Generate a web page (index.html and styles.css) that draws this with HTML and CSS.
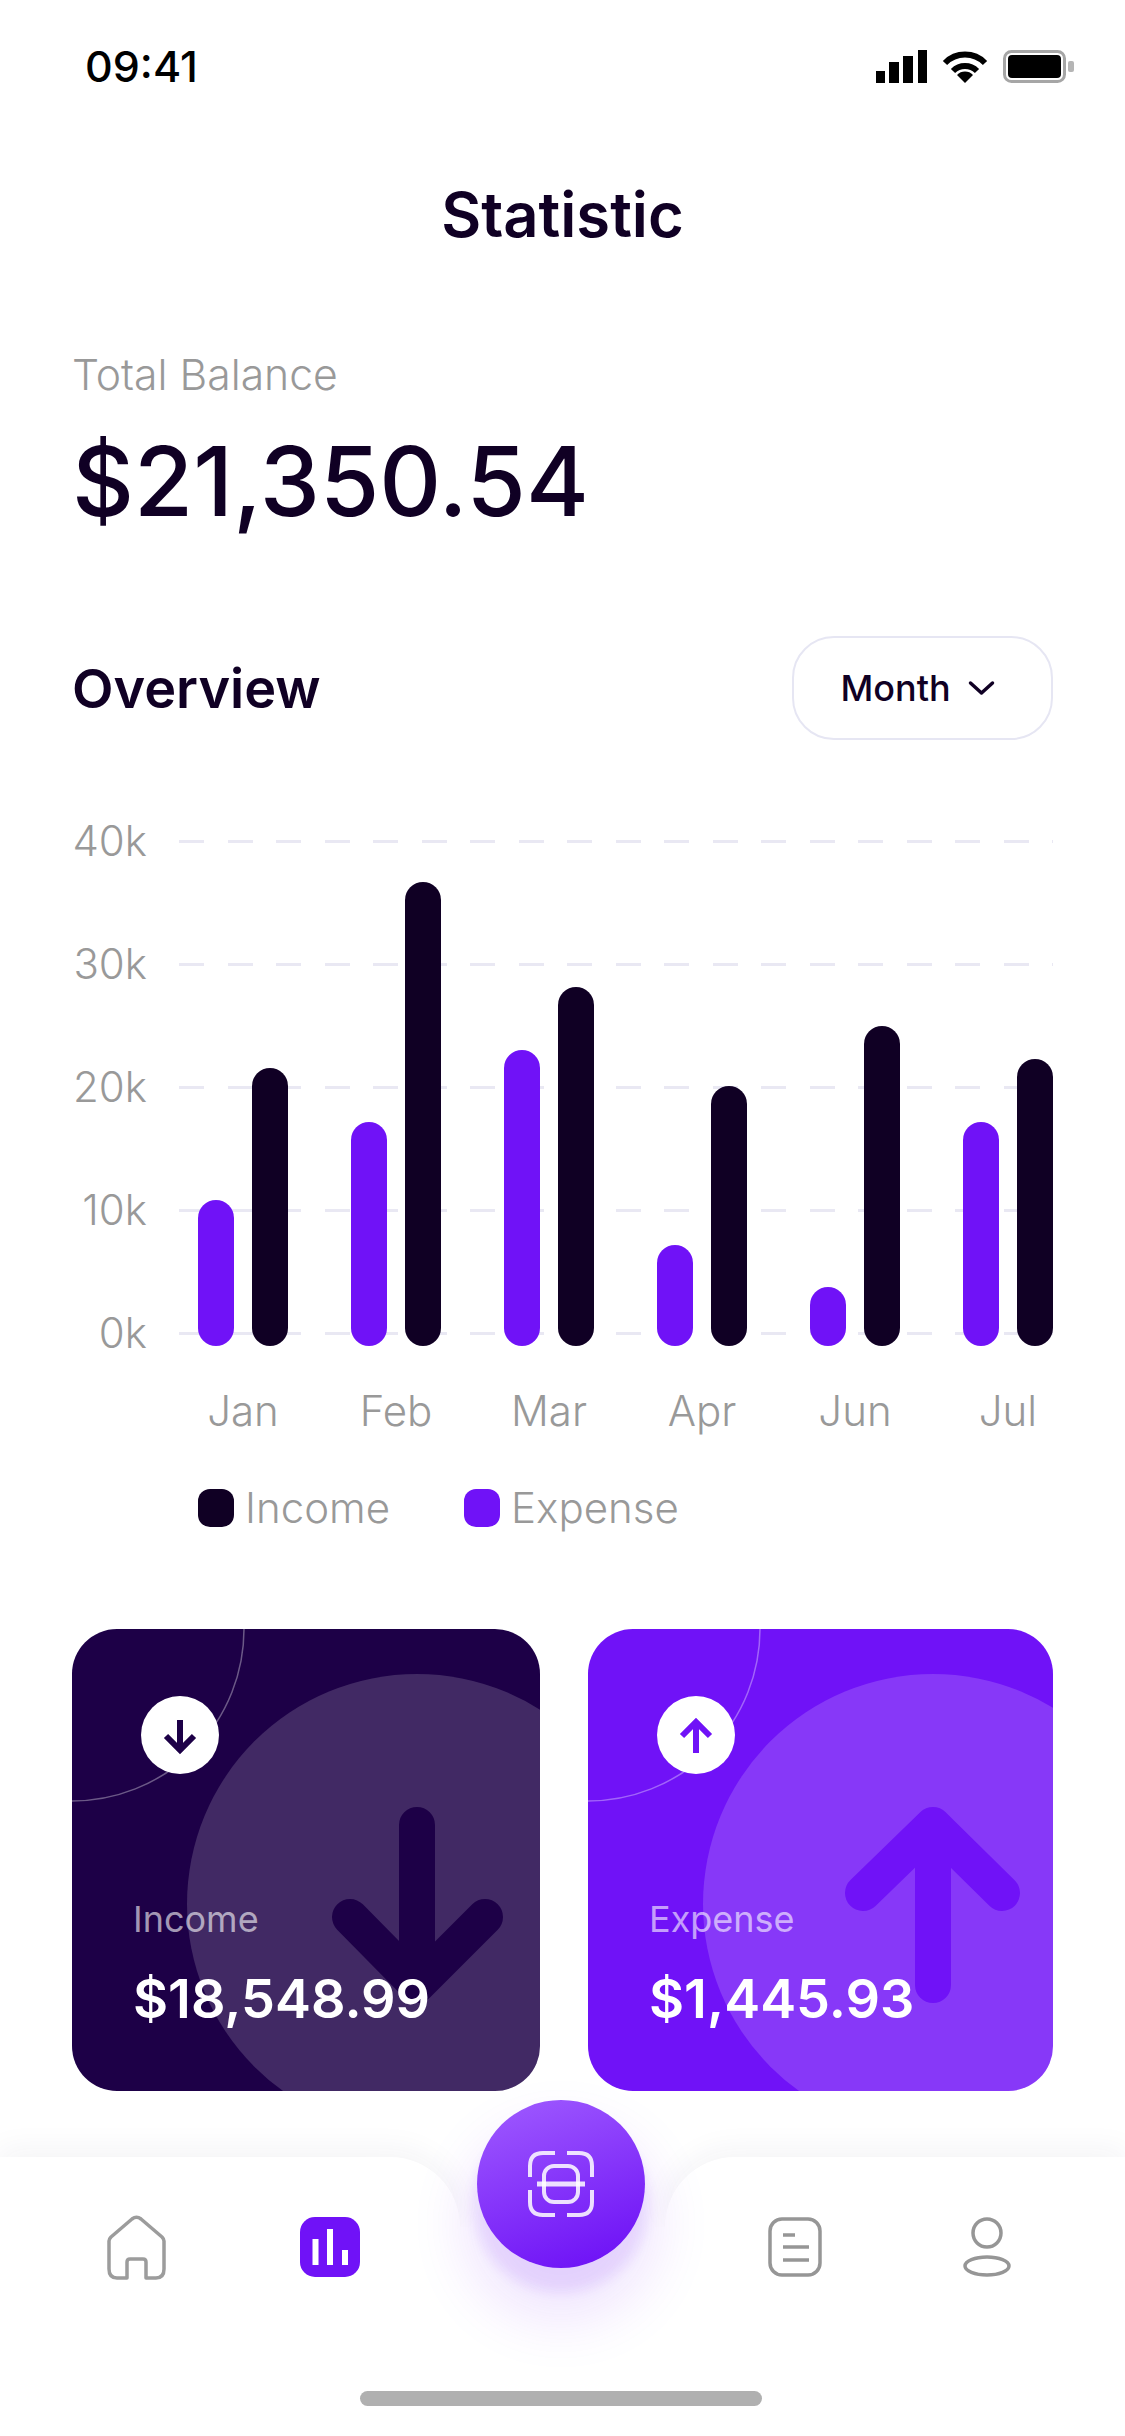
FILE: index.html
```html
<!DOCTYPE html>
<html lang="en">
<head>
    <meta charset="UTF-8">
    <meta name="viewport" content="width=device-width, initial-scale=1.0">
    <title>Statistic</title>
    <link rel="stylesheet" href="styles.css">
</head>
<body>
    <div id="screen">
        <div class="status-bar">
            <span class="time">09:41</span>
            <div class="status-icons">
                <svg width="51" height="33" viewBox="0 0 51 33" fill="#000">
                    <rect x="0" y="21" width="9" height="12"/>
                    <rect x="13" y="12" width="10" height="21"/>
                    <rect x="27" y="6" width="10" height="27"/>
                    <rect x="42" y="0" width="9" height="33"/>
                </svg>
                <svg width="46" height="33" viewBox="0 0 46 33" fill="none" stroke="#000" stroke-width="6">
                    <path d="M3 13 A28 28 0 0 1 43 13"/>
                    <path d="M11 21 A17 17 0 0 1 35 21"/>
                    <path d="M23 33 L15 25 A11 11 0 0 1 31 25 Z" fill="#000" stroke="none"/>
                </svg>
                <svg width="71" height="33" viewBox="0 0 71 33">
                    <rect x="1.5" y="1.5" width="60" height="30" rx="7" fill="none" stroke="#a6a6a6" stroke-width="3"/>
                    <rect x="5" y="5" width="53" height="23" rx="4" fill="#000"/>
                    <rect x="65" y="11" width="6" height="11" rx="2" fill="#b5b5b5"/>
                </svg>
            </div>
        </div>

        <h1 class="title">Statistic</h1>

        <div class="balance">
            <p class="balance-label">Total Balance</p>
            <p class="balance-value">$21,350.54</p>
        </div>

        <div class="overview-head">
            <h2>Overview</h2>
            <div class="month-select">
                <span>Month</span>
                <svg width="27" height="16" viewBox="0 0 27 16" fill="none" stroke="#100024" stroke-width="3.5" stroke-linecap="round" stroke-linejoin="round">
                    <path d="M2.5 3 L13.5 13 L24.5 3"/>
                </svg>
            </div>
        </div>

        <div class="chart">
            <div class="y-axis">
                <span>40k</span>
                <span>30k</span>
                <span>20k</span>
                <span>10k</span>
                <span>0k</span>
            </div>
            <div class="plot">
                <div class="grid-lines">
                    <i></i><i></i><i></i><i></i><i></i>
                </div>
                <div class="bars">
                    <div class="bar-group">
                        <div class="bar expense" style="height: 146px"></div>
                        <div class="bar income" style="height: 278px"></div>
                    </div>
                    <div class="bar-group">
                        <div class="bar expense" style="height: 224px"></div>
                        <div class="bar income" style="height: 464px"></div>
                    </div>
                    <div class="bar-group">
                        <div class="bar expense" style="height: 296px"></div>
                        <div class="bar income" style="height: 359px"></div>
                    </div>
                    <div class="bar-group">
                        <div class="bar expense" style="height: 101px"></div>
                        <div class="bar income" style="height: 260px"></div>
                    </div>
                    <div class="bar-group">
                        <div class="bar expense" style="height: 59px"></div>
                        <div class="bar income" style="height: 320px"></div>
                    </div>
                    <div class="bar-group">
                        <div class="bar expense" style="height: 224px"></div>
                        <div class="bar income" style="height: 287px"></div>
                    </div>
                </div>
            </div>
        </div>

        <div class="months">
            <span>Jan</span>
            <span>Feb</span>
            <span>Mar</span>
            <span>Apr</span>
            <span>Jun</span>
            <span>Jul</span>
        </div>

        <div class="legend">
            <div class="legend-item"><i class="swatch income"></i>Income</div>
            <div class="legend-item"><i class="swatch expense"></i>Expense</div>
        </div>

        <div class="cards">
            <div class="card card-income">
                <svg class="card-deco" viewBox="0 0 468 462" fill="none">
                    <circle cx="0" cy="0" r="172" stroke="#fff" stroke-opacity="0.35" stroke-width="1.5"/>
                    <circle cx="345" cy="275" r="230" fill="#fff" fill-opacity="0.16"/>
                    <path d="M345 196 V356 M278 288 L345 356 L413 288" stroke="#1d0047" stroke-width="36" stroke-linecap="round" stroke-linejoin="round"/>
                </svg>
                <div class="card-icon">
                    <svg width="78" height="78" viewBox="0 0 78 78" fill="none" stroke="#1d0047" stroke-width="6">
                        <path d="M39 24 V54 M25 40 L39 54 L53 40"/>
                    </svg>
                </div>
                <p class="card-label">Income</p>
                <p class="card-value">$18,548.99</p>
            </div>
            <div class="card card-expense">
                <svg class="card-deco" viewBox="0 0 465 462" fill="none">
                    <circle cx="0" cy="0" r="172" stroke="#fff" stroke-opacity="0.35" stroke-width="1.5"/>
                    <circle cx="345" cy="275" r="230" fill="#fff" fill-opacity="0.16"/>
                    <path d="M345 196 V356 M275 264 L345 196 L414 264" stroke="#7012f7" stroke-width="36" stroke-linecap="round" stroke-linejoin="round"/>
                </svg>
                <div class="card-icon">
                    <svg width="78" height="78" viewBox="0 0 78 78" fill="none" stroke="#7012f7" stroke-width="6">
                        <path d="M39 25 V57 M25 40 L39 26 L53 40"/>
                    </svg>
                </div>
                <p class="card-label">Expense</p>
                <p class="card-value">$1,445.93</p>
            </div>
        </div>

        <div class="nav">
            <div class="nav-panel nav-left">
                <svg width="63" height="66" viewBox="0 0 63 66" fill="none" stroke="#9c9c9c" stroke-width="3.5" stroke-linejoin="round">
                    <path d="M22 64 H12 Q4 64 4 55 V27 Q4 25 6 23 L27 5 Q31.5 1.5 36 5 L57 23 Q59 25 59 27 V55 Q59 64 51 64 H41 V48 Q41 45 38 45 H25 Q22 45 22 48 Z"/>
                </svg>
                <svg width="60" height="60" viewBox="0 0 60 60">
                    <rect width="60" height="60" rx="15" fill="#7012f7"/>
                    <rect x="12.5" y="22" width="6" height="26" fill="#fff"/>
                    <rect x="27" y="12" width="6" height="36" fill="#fff"/>
                    <rect x="42" y="33" width="6" height="15" fill="#fff"/>
                </svg>
            </div>
            <div class="nav-panel nav-right">
                <svg width="54" height="60" viewBox="0 0 54 60" fill="none" stroke="#969696" stroke-width="3.5">
                    <rect x="2" y="2" width="50" height="56" rx="12"/>
                    <path d="M15 18 H27 M15 30 H41 M15 43 H41"/>
                </svg>
                <svg width="48" height="60" viewBox="0 0 48 60" fill="none" stroke="#969696" stroke-width="3.5">
                    <circle cx="24" cy="16" r="14"/>
                    <ellipse cx="24" cy="49" rx="22" ry="9"/>
                </svg>
            </div>
            <div class="scan-btn">
                <svg width="68" height="68" viewBox="0 0 68 68" fill="none" stroke="#fff" stroke-width="4" stroke-opacity="0.85">
                    <path d="M28 3 H16 Q3 3 3 16 V27 M40 3 H52 Q65 3 65 16 V27 M28 65 H16 Q3 65 3 52 V40 M40 65 H52 Q65 65 65 52 V40"/>
                    <rect x="17" y="16" width="34" height="36" rx="10"/>
                    <path d="M10 34 H58" stroke-width="5"/>
                </svg>
            </div>
            <div class="home-indicator"></div>
        </div>
    </div>
</body>
</html>
```

FILE: styles.css
```css
* {
    box-sizing: border-box;
}

html, body {
    margin: 0;
    padding: 0;
    background-color: white;
}

body {
    font-family: Inter, "Noto Sans", sans-serif;
    color: #100024;
}

h1, h2, p {
    margin: 0;
}

#screen {
    width: 1125px;
    height: 2436px;
    overflow: hidden;
    position: relative;
}

/* status bar */
.status-bar {
    height: 132px;
    padding: 0 51px 0 85px;
    display: flex;
    justify-content: space-between;
    align-items: center;
}

.time {
    font-size: 43px;
    font-weight: 500;
    color: #000;
}

.status-icons {
    display: flex;
    align-items: center;
    gap: 15px;
}

/* header */
.title {
    margin-top: 48px;
    line-height: 70px;
    font-size: 61.5px;
    font-weight: 600;
    text-align: center;
}

.balance {
    margin-top: 102px;
    padding-left: 72px;
}

.balance-label {
    line-height: 46px;
    font-size: 42.7px;
    font-weight: 300;
    color: #999;
}

.balance-value {
    margin-top: 28px;
    line-height: 110px;
    font-size: 96px;
    font-weight: 500;
}

.overview-head {
    margin: 100px 72px 0;
    display: flex;
    justify-content: space-between;
    align-items: center;
}

.overview-head h2 {
    font-size: 54px;
    font-weight: 600;
}

.month-select {
    width: 261px;
    height: 104px;
    padding-right: 10px;
    border: 2px solid #e6e6f3;
    border-radius: 42px;
    display: flex;
    justify-content: center;
    align-items: center;
    gap: 17px;
    font-size: 36px;
    font-weight: 500;
}

/* chart */
.chart {
    margin: 79px 72px 0;
    height: 536px;
    display: flex;
    gap: 32px;
}

.y-axis {
    width: 75px;
    display: flex;
    flex-direction: column;
    justify-content: space-between;
    align-items: flex-end;
    font-size: 42px;
    font-weight: 300;
    line-height: 44px;
    color: #999;
}

.plot {
    flex: 1;
    height: 506px;
    margin-top: 21px;
    position: relative;
}

.grid-lines {
    position: absolute;
    top: 0;
    left: 0;
    right: 0;
    height: 495px;
    display: flex;
    flex-direction: column;
    justify-content: space-between;
}

.grid-lines i {
    display: block;
    height: 3px;
    background: repeating-linear-gradient(90deg, #e9e8f3 0 25px, transparent 25px 48.5px);
}

.bars {
    position: relative;
    height: 100%;
    padding-left: 19px;
    display: flex;
    align-items: flex-end;
    gap: 63px;
}

.bar-group {
    width: 90px;
    display: flex;
    align-items: flex-end;
    gap: 18px;
}

.bar {
    width: 36px;
    border-radius: 18px;
}

.income {
    background-color: #100024;
}

.expense {
    background-color: #7012f7;
}

.months {
    margin: 34px 72px 0 198px;
    display: flex;
    gap: 63px;
    font-size: 42px;
    font-weight: 300;
    line-height: 44px;
    color: #999;
}

.months span {
    width: 90px;
    text-align: center;
}

.legend {
    margin: 53px 0 0 198px;
    display: flex;
    gap: 74px;
    font-size: 42px;
    font-weight: 300;
    line-height: 44px;
    color: #999;
}

.legend-item {
    display: flex;
    align-items: center;
    gap: 11px;
}

.swatch {
    width: 36px;
    height: 38px;
    border-radius: 12px;
}

/* cards */
.cards {
    margin: 99px 72px 0;
    display: grid;
    grid-template-columns: 468px 465px;
    gap: 48px;
}

.card {
    height: 462px;
    padding: 67px 0 0 61px;
    border-radius: 45px;
    overflow: hidden;
    position: relative;
    color: white;
}

.card-income {
    background-color: #1d0047;
}

.card-expense {
    background-color: #7012f7;
}

.card-deco {
    position: absolute;
    top: 0;
    left: 0;
    width: 100%;
    height: 100%;
}

.card-icon {
    position: relative;
    width: 78px;
    height: 78px;
    margin-left: 8px;
    border-radius: 50%;
    background-color: white;
}

.card-icon svg {
    display: block;
}

.card-label {
    position: relative;
    margin-top: 125px;
    line-height: 40px;
    font-size: 36px;
    font-weight: 400;
    color: rgba(255, 255, 255, 0.6);
}

.card-value {
    position: relative;
    margin-top: 27px;
    line-height: 66px;
    font-size: 54px;
    font-weight: 600;
}

/* bottom nav */
.nav {
    margin-top: 66px;
    height: 279px;
    display: flex;
    justify-content: space-between;
}

.nav-panel {
    width: 460px;
    height: 100%;
    padding-top: 57px;
    display: flex;
    align-items: flex-start;
    position: relative;
}

/* the shadow only shows along the top edge and the curved corner */
.nav-panel::before {
    content: "";
    position: absolute;
    top: 0;
    left: 0;
    right: 0;
    height: 70px;
    background-color: white;
    box-shadow: 0 -8px 30px rgba(40, 30, 80, 0.05);
    clip-path: inset(-50px -50px 0 -50px);
}

.nav-panel svg {
    position: relative;
    margin-top: 3px;
}

.nav-left {
    padding-left: 105px;
    gap: 132px;
}

.nav-left::before {
    border-top-right-radius: 70px;
}

.nav-left svg:first-child {
    margin-top: 0;
}

.nav-right {
    padding-left: 103px;
    gap: 141px;
}

.nav-right::before {
    border-top-left-radius: 70px;
}

.scan-btn {
    position: absolute;
    top: 2100px;
    left: 477px;
    width: 168px;
    height: 168px;
    border-radius: 50%;
    background: linear-gradient(160deg, #a05cff, #6a0cf5);
    box-shadow: 0 20px 12px 4px rgba(112, 18, 247, 0.09), 0 40px 60px 10px rgba(112, 18, 247, 0.12);
    display: flex;
    justify-content: center;
    align-items: center;
}

.home-indicator {
    position: absolute;
    top: 2391px;
    left: 360px;
    width: 402px;
    height: 15px;
    border-radius: 8px;
    background-color: #b0b0b0;
}
```
